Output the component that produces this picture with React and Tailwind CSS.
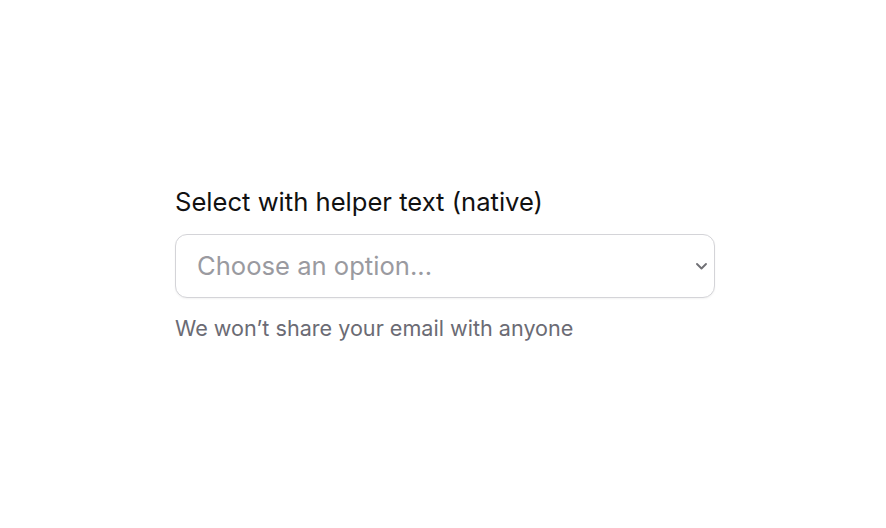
import React from "react";

export default function App() {
  return (
    <div className="w-[886px] h-[528px] bg-white flex items-center justify-center" style={{ fontFamily: "Inter, 'Liberation Sans', sans-serif" }}>
      <div className="w-[540px] ml-[4px] flex flex-col">
        <label className="text-[25.6px] leading-[32px] text-[#111111] mb-[16px]">Select with helper text (native)</label>
        <div className="relative">
          <select
            defaultValue=""
            className="appearance-none w-full h-[64px] rounded-[12px] border border-[#d4d4d8] bg-white pl-[21px] pr-[40px] text-[25.6px] text-[#9a9aa0] shadow-[0_1px_2px_rgba(0,0,0,0.05)] outline-none"
            style={{ fontFamily: "Inter, 'Liberation Sans', sans-serif" }}
          >
            <option value="" disabled>Choose an option...</option>
            <option value="a">Option A</option>
            <option value="b">Option B</option>
          </select>
          <svg className="absolute right-[7px] top-[27px] pointer-events-none" width="13" height="10" viewBox="0 0 13 10" fill="none">
            <path d="M2 3 L6.5 7.5 L11 3" stroke="#707075" strokeWidth="1.9" strokeLinecap="round" strokeLinejoin="round" />
          </svg>
        </div>
        <p className="mt-[16px] text-[21.6px] leading-[28px] text-[#6b6b74]">We won’t share your email with anyone</p>
      </div>
    </div>
  );
}
